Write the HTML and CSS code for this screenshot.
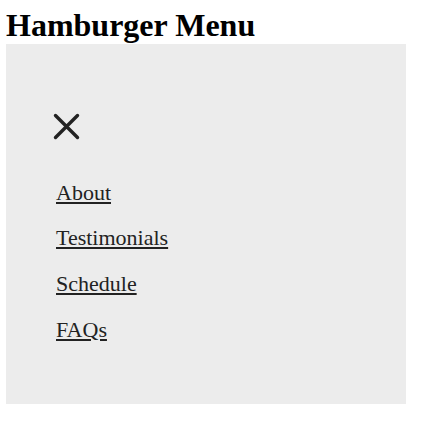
FILE: index.html
```html
<!DOCTYPE html>
<html lang="en">
<head>
<meta charset="utf-8">
<title>Hamburger Menu</title>
<link rel="stylesheet" href="styles.css">
</head>
<body>
<h1 class="title">Hamburger Menu</h1>
<nav class="menu">
  <button class="close" aria-label="Close menu">
    <svg width="27" height="27" viewBox="0 0 27 27" aria-hidden="true">
      <path d="M2.5 2.5 L24.5 24.5 M24.5 2.5 L2.5 24.5" stroke="#222" stroke-width="3.4" stroke-linecap="round" fill="none"/>
    </svg>
  </button>
  <ul class="links">
    <li><a href="#">About</a></li>
    <li><a href="#">Testimonials</a></li>
    <li><a href="#">Schedule</a></li>
    <li><a href="#">FAQs</a></li>
  </ul>
</nav>
</body>
</html>
```
FILE: styles.css
```css
html, body {
  background: #ffffff;
}
body {
  margin: 7px 6px;
  font-family: "Liberation Serif", "Times New Roman", serif;
}
.title {
  margin: 0;
  font-size: 32px;
  font-weight: bold;
  line-height: 36.8px;
  color: #000;
}
.menu {
  width: 400px;
  height: 360px;
  box-sizing: border-box;
  background: #ececec;
  padding: 69px 0 0 47px;
  display: flex;
  flex-direction: column;
  align-items: flex-start;
}
.close {
  display: block;
  border: 0;
  padding: 0;
  margin: 0;
  background: none;
  width: 27px;
  height: 27px;
}
.close svg {
  display: block;
}
.links {
  list-style: none;
  margin: 40px 0 0 3px;
  padding: 0;
  display: flex;
  flex-direction: column;
  gap: 20px;
}
.links a {
  display: block;
  font-size: 22px;
  line-height: 25.6px;
  color: #222;
  text-decoration: underline;
  text-decoration-thickness: 2px;
  text-underline-offset: 2px;
}
```
